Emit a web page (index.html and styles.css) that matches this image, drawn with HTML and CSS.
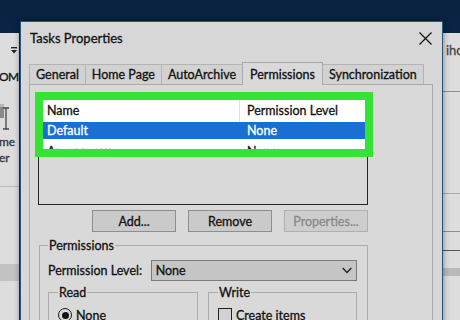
FILE: index.html
```html
<!DOCTYPE html>
<html lang="en">
<head>
  <meta charset="UTF-8">
  <title>Tasks Properties</title>
  <link rel="stylesheet" href="styles.css">
</head>
<body>
  <div class="desktop">

    <div class="bg-window left-window">
      <div class="qat">
        <svg width="6" height="7" viewBox="0 0 6 7"><rect x="0" y="0" width="6" height="1.4" fill="#222"/><path d="M0 3 L6 3 L3 6.5 Z" fill="#222"/></svg>
      </div>
      <div class="ribbon-tab">OM</div>
      <div class="ribbon-icon">
        <svg width="10" height="30" viewBox="0 0 10 30"><rect x="0" y="2" width="4" height="14" fill="#8a8a8a"/><rect x="0" y="2" width="4" height="3" fill="#b5b5b5"/><path d="M3 6 H9 M6 6 V27 M3 27 H9" stroke="#444" stroke-width="1.3" fill="none"/></svg>
      </div>
      <div class="ribbon-label">me</div>
      <div class="ribbon-label">er</div>
      <div class="ribbon-rule"></div>
      <div class="nav-band"></div>
    </div>

    <div class="bg-window right-window">
      <div class="peek-text">iho</div>
      <div class="peek-rule first"></div>
      <div class="peek-rule second"></div>
      <div class="peek-rule third"></div>
      <div class="peek-rule fourth"></div>
      <div class="peek-band"></div>
    </div>

    <div class="dialog">
      <div class="title-bar">
        <span class="title">Tasks Properties</span>
        <svg class="close" width="13" height="13" viewBox="0 0 13 13"><path d="M0.5 0.5 L12.5 12.5 M12.5 0.5 L0.5 12.5" stroke="#111" stroke-width="1.2"/></svg>
      </div>

      <div class="tabs">
        <div class="tab">General</div>
        <div class="tab">Home Page</div>
        <div class="tab">AutoArchive</div>
        <div class="tab active">Permissions</div>
        <div class="tab">Synchronization</div>
      </div>

      <div class="tab-panel">
        <div class="list-view">
          <div class="list-rows">
            <div class="list-row list-header">
              <span class="col-name">Name</span>
              <span class="col-level">Permission Level</span>
            </div>
            <div class="list-row selected">
              <span class="col-name">Default</span>
              <span class="col-level">None</span>
            </div>
            <div class="list-row next">
              <span class="col-name">Anonymous</span>
              <span class="col-level">None</span>
            </div>
          </div>
        </div>
        <div class="highlight"></div>

        <div class="button-row">
          <div class="btn">Add...</div>
          <div class="btn">Remove</div>
          <div class="btn disabled">Properties...</div>
        </div>

        <fieldset class="group perms">
          <legend>Permissions</legend>
          <div class="level-row">
            <span class="level-label">Permission Level:</span>
            <div class="select">
              <span>None</span>
              <svg width="10" height="7" viewBox="0 0 10 7"><path d="M0.7 1 L5 5.5 L9.3 1" stroke="#222" stroke-width="1.4" fill="none"/></svg>
            </div>
          </div>
          <div class="sub-groups">
            <fieldset class="group sub read">
              <legend>Read</legend>
              <div class="option"><span class="radio"></span>None</div>
            </fieldset>
            <fieldset class="group sub write">
              <legend>Write</legend>
              <div class="option"><span class="checkbox"></span>Create items</div>
            </fieldset>
          </div>
        </fieldset>
      </div>
    </div>

  </div>
</body>
</html>
```

FILE: styles.css
```css
html, body {
  margin: 0;
  padding: 0;
}

body {
  width: 460px;
  height: 320px;
  overflow: hidden;
  font-family: Lato, 'Liberation Sans', sans-serif;
  font-size: 12.5px;
  color: #111;
  -webkit-text-stroke: 0.3px currentColor;
}

.desktop {
  position: relative;
  width: 460px;
  height: 320px;
  overflow: hidden;
  background: linear-gradient(180deg, #0a2240 0%, #10305a 60%, #14375f 100%);
}

/* windows peeking out behind the dialog */
.bg-window {
  position: absolute;
  top: 33px;
  bottom: 0;
  background: #dddddd;
  overflow: hidden;
}

.left-window {
  left: 0;
  width: 19px;
  display: flex;
  flex-direction: column;
}

.qat {
  display: flex;
  justify-content: flex-end;
  padding: 14px 2px 0 0;
  height: 7px;
}

.ribbon-tab {
  margin-top: 16px;
  font-size: 12px;
  letter-spacing: -0.5px;
  line-height: 14px;
  margin-left: -1px;
}

.ribbon-icon {
  margin-top: 18px;
  height: 32px;
}

.ribbon-label {
  font-size: 12px;
  line-height: 16px;
  color: #333;
  margin-left: -1px;
}

.ribbon-rule {
  margin-top: 20px;
  height: 1px;
  background: #b9b9b9;
}

.nav-band {
  margin-top: 77px;
  height: 17px;
  background: #c2c2c2;
}

.right-window {
  left: 443px;
  right: 0;
  display: flex;
  flex-direction: column;
}

.peek-text {
  padding: 9px 0 0 3px;
  font-size: 13px;
  line-height: 16px;
  color: #444;
}

.peek-rule {
  height: 1px;
  background: #8d8d8d;
}

.peek-rule.first { margin-top: 33px; }
.peek-rule.second { margin-top: 101px; background: #a8a8a8; }
.peek-rule.third { margin-top: 37px; }
.peek-rule.fourth { margin-top: 18px; background: #555; }

.peek-band {
  margin-top: 17px;
  height: 8px;
  background: #b9b9b9;
}

/* dialog */
.dialog {
  position: absolute;
  left: 20px;
  top: 21px;
  width: 423px;
  bottom: -10px;
  box-sizing: border-box;
  background: #d7d7d7;
  border: 1px solid #2a5583;
  box-shadow: 0 0 6px rgba(0, 0, 0, 0.45);
}

.title-bar {
  height: 32px;
  display: flex;
  align-items: center;
  justify-content: space-between;
  padding: 0 10px 0 9px;
}

.title {
  font-size: 13px;
}

.tabs {
  display: flex;
  align-items: flex-end;
  height: 22px;
  margin-top: 8px;
  padding-left: 8px;
}

.tab {
  height: 20px;
  padding: 0 6px;
  box-sizing: border-box;
  display: flex;
  align-items: center;
  border: 1px solid #b3b3b3;
  border-bottom: none;
  margin-right: -1px;
  background: #d2d2d2;
}

.tab.active {
  height: 23px;
  margin-bottom: -1px;
  padding: 0 7px;
  background: #d9d9d9;
  border-color: #a9a9a9;
  position: relative;
  z-index: 1;
}

.tab-panel {
  position: relative;
  width: 404px;
  height: 240px;
  margin-left: 8px;
  padding: 12px 0 0 8px;
  box-sizing: border-box;
  border: 1px solid #ababab;
  background: #d9d9d9;
}

.list-view {
  width: 330px;
  height: 108px;
  box-sizing: border-box;
  border: 1px solid #262626;
}

.list-rows {
  height: 56px;
  overflow: hidden;
  background: #fff;
}

.list-row {
  display: flex;
  height: 17px;
  align-items: center;
}

.list-row.next {
  align-items: flex-start;
  padding-top: 5px;
}

.list-header {
  height: 24px;
  align-items: stretch;
}

.col-name {
  width: 201px;
  padding-left: 8px;
  box-sizing: border-box;
}

.col-level {
  padding-left: 7px;
}

.list-header span {
  display: flex;
  align-items: center;
}

.list-header .col-name {
  border-right: 1px solid #e2e2e2;
}

.list-row.selected {
  background: #1b6fd2;
  color: #fff;
}

.highlight {
  position: absolute;
  left: 5px;
  top: 7px;
  width: 338px;
  height: 65px;
  box-sizing: border-box;
  border: 8px solid #34e334;
}

.button-row {
  display: flex;
  justify-content: flex-end;
  gap: 12px;
  width: 330px;
  margin-top: 5px;
}

.btn {
  width: 84px;
  height: 22px;
  box-sizing: border-box;
  display: flex;
  align-items: center;
  justify-content: center;
  border: 1px solid #8e8e8e;
  background: #cacaca;
}

.btn.disabled {
  color: #8a8a8a;
  border-color: #b0b0b0;
  background: #cdcdcd;
}

.group {
  margin: 0;
  border: 1px solid #acacac;
  box-sizing: border-box;
  min-width: 0;
}

.group legend {
  padding: 0 1px;
  line-height: 15px;
}

.perms {
  width: 329px;
  margin: 6px 0 0 1px;
  padding: 0 10px 20px 8px;
}

.level-row {
  display: flex;
  align-items: center;
  margin-top: 7px;
}

.level-label {
  width: 103px;
}

.select {
  width: 207px;
  height: 21px;
  box-sizing: border-box;
  display: flex;
  align-items: center;
  justify-content: space-between;
  padding: 0 4px 0 4px;
  border: 1px solid #7b7b7b;
  background: #c5c5c5;
}

.sub-groups {
  display: flex;
  gap: 10px;
  margin-top: 4px;
}

.sub {
  padding: 0 8px 10px 9px;
}

.sub.read { width: 150px; }
.sub.write { width: 149px; }

.option {
  display: flex;
  align-items: center;
  gap: 4px;
  height: 14px;
  margin-top: 8px;
}

.radio {
  width: 14px;
  height: 14px;
  box-sizing: border-box;
  border: 1.5px solid #1a1a1a;
  border-radius: 50%;
  display: flex;
  align-items: center;
  justify-content: center;
}

.radio::after {
  content: '';
  width: 7px;
  height: 7px;
  border-radius: 50%;
  background: #111;
}

.checkbox {
  width: 14px;
  height: 14px;
  box-sizing: border-box;
  border: 1px solid #222;
  background: #d2d2d2;
}
```
